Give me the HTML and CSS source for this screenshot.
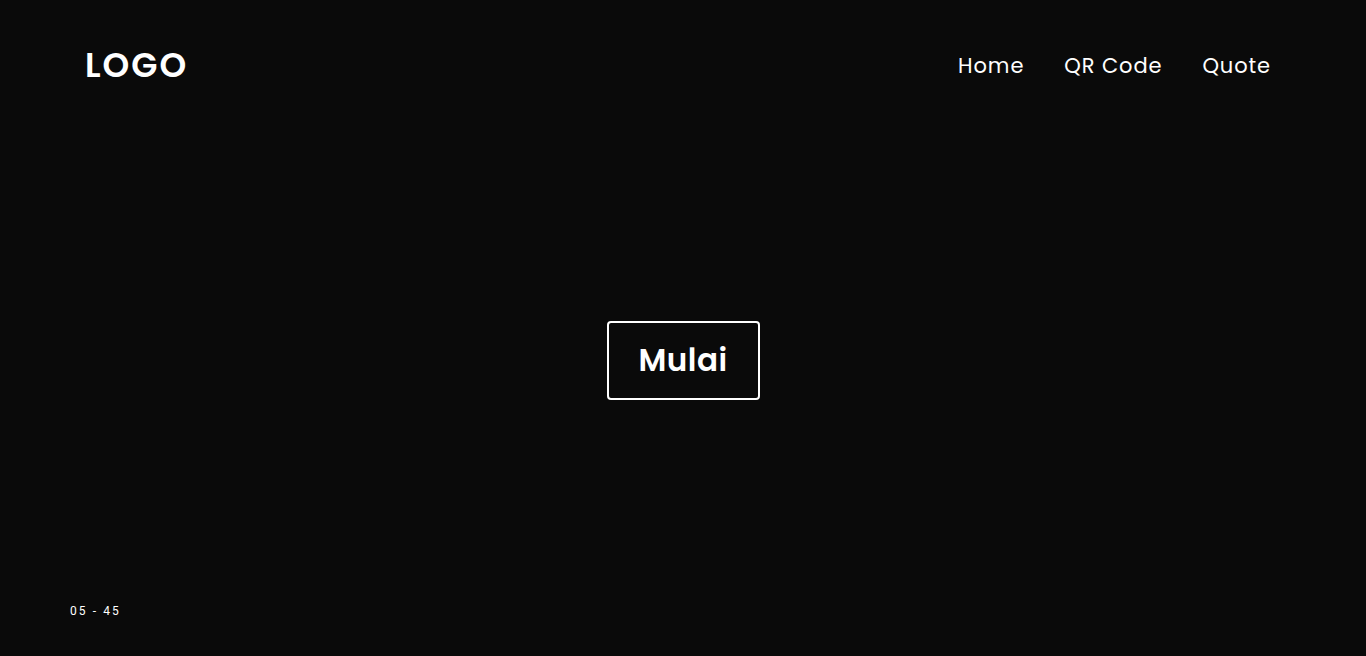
FILE: index.html
```html
<!DOCTYPE html>
<html lang="id">
<head>
<meta charset="utf-8">
<title>Mulai</title>
<link rel="stylesheet" href="styles.css">
</head>
<body>
<div class="page">
  <header class="header">
    <div class="logo">LOGO</div>
    <nav class="nav">
      <a href="#" class="nav-link">Home</a>
      <a href="#" class="nav-link">QR Code</a>
      <a href="#" class="nav-link">Quote</a>
    </nav>
  </header>
  <main class="main">
    <button class="start-btn">Mulai</button>
  </main>
  <footer class="footer">
    <span class="clock">05 - 45</span>
  </footer>
</div>
</body>
</html>
```
FILE: styles.css
```css
* { box-sizing: border-box; }
html, body { margin: 0; padding: 0; }
body {
  background: #0a0a0a;
  color: #ffffff;
  font-family: "Poppins", "Inter", "Noto Sans", sans-serif;
}
.page {
  height: 100vh;
  display: flex;
  flex-direction: column;
}
.header {
  height: 130px;
  display: flex;
  align-items: center;
  justify-content: space-between;
  padding: 0 95px 0 85px;
}
.logo {
  font-size: 34px;
  font-weight: 600;
  letter-spacing: 2px;
}
.nav {
  display: flex;
  gap: 40px;
}
.nav-link {
  color: #ffffff;
  text-decoration: none;
  font-size: 21px;
  font-weight: 400;
  letter-spacing: 0.9px;
}
.main {
  flex: 1;
  display: flex;
  align-items: center;
  justify-content: center;
}
.start-btn {
  width: 153px;
  height: 79px;
  padding: 0 0 0 0;
  background: transparent;
  border: 2px solid #ffffff;
  border-radius: 4px;
  color: #ffffff;
  font-family: inherit;
  font-size: 31px;
  font-weight: 600;
  letter-spacing: 0.5px;
  cursor: pointer;
}
.footer {
  height: 65px;
  padding: 6px 0 0 70px;
}
.clock {
  font-family: Roboto, "Noto Sans", sans-serif;
  font-size: 12px;
  letter-spacing: 2.1px;
}
```
